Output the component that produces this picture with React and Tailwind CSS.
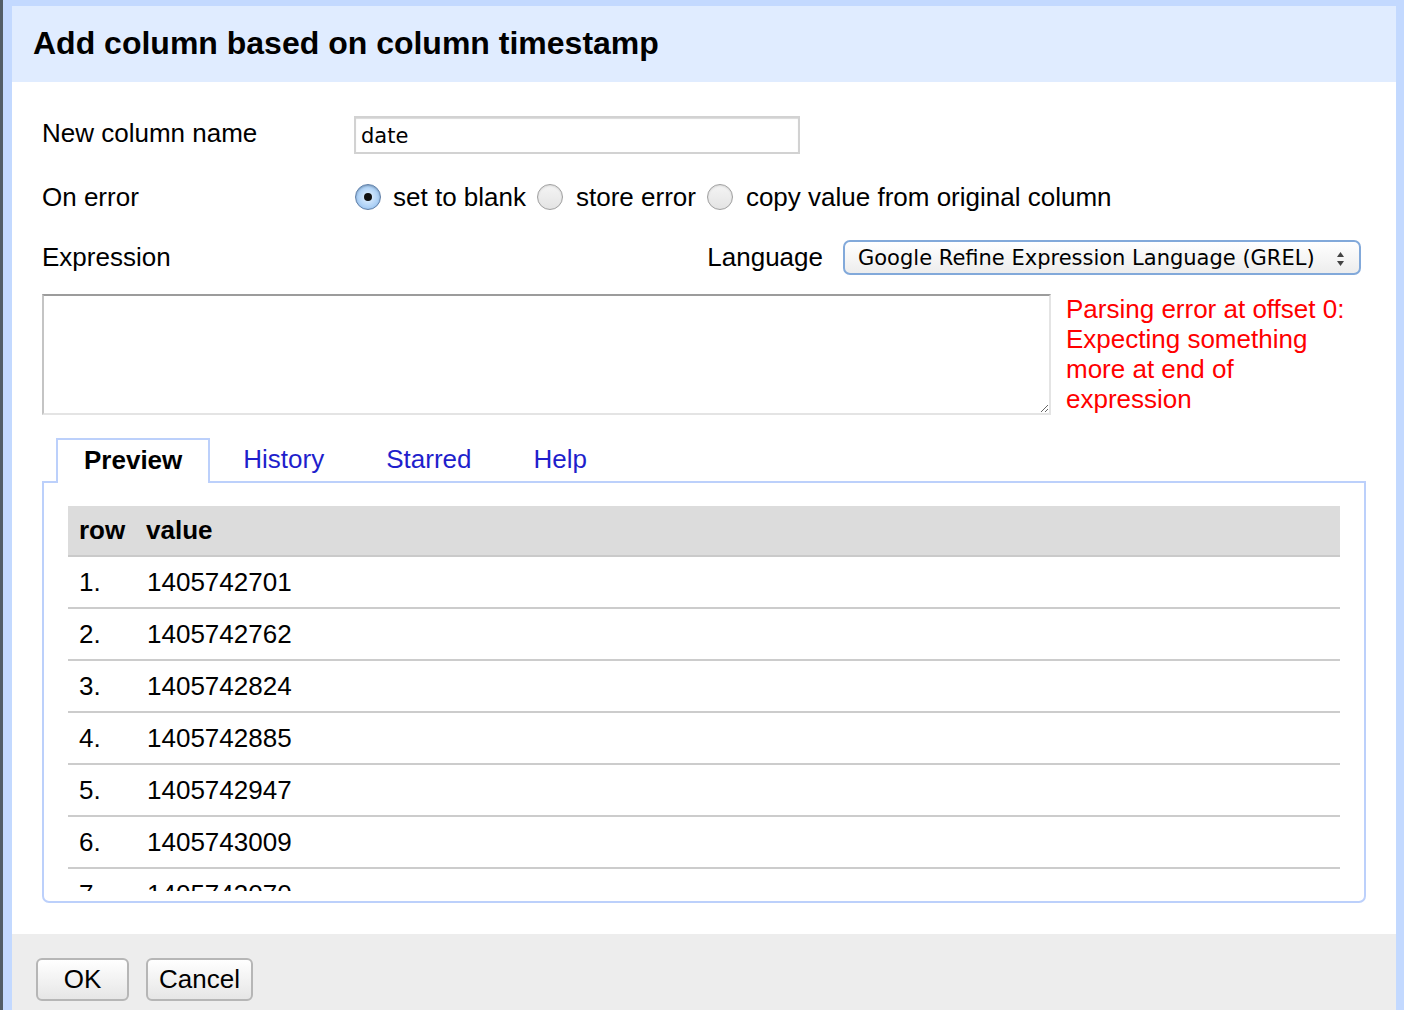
const rows = [
  "1405742701",
  "1405742762",
  "1405742824",
  "1405742885",
  "1405742947",
  "1405743009",
  "1405743070",
];

function Radio({ checked }) {
  if (checked) {
    return (
      <span className="w-[26px] h-[26px] rounded-full border border-[#5f7fa8] bg-radial from-[#e8f4ff] to-[#86b9ee] flex items-center justify-center shrink-0 shadow-[inset_0_1px_2px_rgba(0,0,0,0.25)]">
        <span className="w-[8px] h-[8px] rounded-full bg-[#111]" />
      </span>
    );
  }
  return (
    <span className="w-[26px] h-[26px] rounded-full border border-[#a0a0a0] bg-linear-to-b from-[#f4f4f4] to-[#e4e4e4] shrink-0 shadow-[inset_0_1px_2px_rgba(0,0,0,0.12)]" />
  );
}

export default function App() {
  return (
    <div className="flex w-[1404px] h-[1010px] overflow-hidden bg-white text-black font-['Liberation_Sans',Arial,sans-serif]">
      <div className="w-[3px] bg-[#525d67]" />
      <div className="flex-1 flex flex-col border-t-[6px] border-l-[9px] border-r-[8px] border-[#c3d9ff]">
        {/* header */}
        <div className="h-[76px] shrink-0 bg-[#e0ecff] pl-[21px] pb-[2px] flex items-center text-[32px] font-bold">
          Add column based on column timestamp
        </div>

        {/* body */}
        <div className="flex-1 flex flex-col px-[30px] pt-[34px] text-[26px]">
          <div className="flex items-center h-[38px]">
            <div className="w-[312px] mb-[4px]">New column name</div>
            <input
              defaultValue="date"
              className="w-[446px] h-[38px] border-2 border-[#d2d2d2] shadow-[inset_0_1px_1px_rgba(0,0,0,0.15)] px-[5px] pt-[2px] text-[21px] font-['DejaVu_Sans',sans-serif] outline-none"
            />
          </div>

          <div className="flex items-center h-[30px] mt-[28px]">
            <div className="w-[312px]">On error</div>
            <div className="flex items-center ml-[1px]">
              <Radio checked />
              <span className="ml-[12px] mr-[11px]">set to blank</span>
              <Radio />
              <span className="ml-[13px] mr-[11px]">store error</span>
              <Radio />
              <span className="ml-[13px]">copy value from original column</span>
            </div>
          </div>

          <div className="flex items-center justify-between h-[35px] mt-[28px]">
            <div>Expression</div>
            <div className="flex items-center mr-[5px]">
              <span>Language</span>
              <div className="ml-[20px] w-[518px] h-[35px] rounded-[7px] border-2 border-[#82a9da] bg-linear-to-b from-white to-[#ededed] flex items-center justify-between pl-[13px] pr-[14px] pt-[2px] text-[21px] font-['DejaVu_Sans',sans-serif]">
                <span>Google Refine Expression Language (GREL)</span>
                <svg width="9" height="16" viewBox="0 0 9 16">
                  <path d="M4.5 1 L8 6 L1 6 Z" fill="#444" />
                  <path d="M4.5 15 L8 10 L1 10 Z" fill="#444" />
                </svg>
              </div>
            </div>
          </div>

          <div className="flex mt-[19px]">
            <textarea className="w-[1009px] h-[121px] shrink-0 border-2 border-t-[#9c9c9c] border-l-[#c4c4c4] border-r-[#e4e4e4] border-b-[#e4e4e4] outline-none resize-both" />
            <div className="ml-[15px] w-[300px] leading-[30px] text-[#ff0000]">
              Parsing error at offset 0: Expecting something more at end of expression
            </div>
          </div>

          {/* tabs */}
          <div className="flex items-start h-[43px] mt-[23px] pl-[14px]">
            <div className="relative z-10 h-[45px] px-[26px] mr-[2px] bg-white border-2 border-b-0 border-[#bcd0fb] flex items-center pb-[2px] font-bold">
              Preview
            </div>
            <div className="h-[43px] px-[31px] flex items-center text-[#1f1fcc]">History</div>
            <div className="h-[43px] px-[31px] flex items-center text-[#1f1fcc]">Starred</div>
            <div className="h-[43px] px-[31px] flex items-center text-[#1f1fcc]">Help</div>
          </div>

          <div className="h-[422px] border-2 border-[#bcd0fb] rounded-b-[7px] pt-[23px] px-[24px] pb-[10px]">
            <div className="h-full overflow-hidden">
              <div className="flex items-center h-[51px] bg-[#dcdcdc] border-b-2 border-[#cacaca] font-bold">
                <div className="w-[67px] px-[11px]">row</div>
                <div className="px-[11px]">value</div>
              </div>
              {rows.map((v, i) => (
                <div key={v} className="flex items-center h-[52px] border-b-2 border-[#cccccc]">
                  <div className="w-[67px] px-[11px]">{i + 1}.</div>
                  <div className="px-[12px]">{v}</div>
                </div>
              ))}
            </div>
          </div>
        </div>

        {/* footer */}
        <div className="h-[76px] shrink-0 bg-[#ededed] flex items-start pt-[24px] pl-[24px] gap-[17px] text-[26px]">
          <button className="w-[93px] h-[43px] rounded-[6px] border-2 border-[#b6b6b6] bg-linear-to-b from-white to-[#e6e6e6]">
            OK
          </button>
          <button className="w-[107px] h-[43px] rounded-[6px] border-2 border-[#b6b6b6] bg-linear-to-b from-white to-[#e6e6e6]">
            Cancel
          </button>
        </div>
      </div>
    </div>
  );
}
